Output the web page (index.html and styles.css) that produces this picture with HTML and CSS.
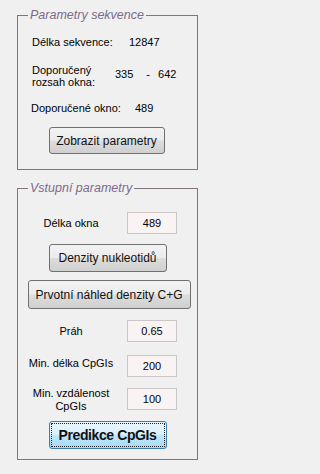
FILE: index.html
```html
<!DOCTYPE html>
<html lang="cs">
<head>
<meta charset="utf-8">
<title>Parametry</title>
<link rel="stylesheet" href="styles.css">
</head>
<body>
<div class="app">
  <fieldset class="panel panel-seq">
    <legend class="panel-title">Parametry sekvence</legend>
    <div class="seq-body">
      <div class="info-row row-len">
        <span class="info-label">Délka sekvence:</span>
        <span class="info-val">12847</span>
      </div>
      <div class="info-row row-range">
        <span class="info-label">Doporučený<br>rozsah okna:</span>
        <span class="range">
          <span class="r-from">335</span><span class="r-dash">-</span><span class="r-to">642</span>
        </span>
      </div>
      <div class="info-row row-win">
        <span class="info-label">Doporučené okno:</span>
        <span class="info-val">489</span>
      </div>
      <button class="btn btn-show" type="button">Zobrazit parametry</button>
    </div>
  </fieldset>

  <fieldset class="panel panel-in">
    <legend class="panel-title">Vstupní parametry</legend>
    <div class="in-body">
      <div class="field-row row-a">
        <label class="field-label">Délka okna</label>
        <div class="field-box">489</div>
      </div>
      <button class="btn btn-dens" type="button">Denzity nukleotidů</button>
      <button class="btn btn-prev" type="button">Prvotní náhled denzity C+G</button>
      <div class="field-row row-b">
        <label class="field-label">Práh</label>
        <div class="field-box">0.65</div>
      </div>
      <div class="field-row row-c">
        <label class="field-label lbl-up">Min. délka CpGIs</label>
        <div class="field-box">200</div>
      </div>
      <div class="field-row row-d">
        <label class="field-label two">Min. vzdálenost<br>CpGIs</label>
        <div class="field-box">100</div>
      </div>
      <button class="btn btn-predict" type="button">Predikce CpGIs</button>
    </div>
  </fieldset>
</div>
</body>
</html>
```

FILE: styles.css
```css
html, body {
  margin: 0;
  padding: 0;
  background: #f0f0f0;
}

body {
  font-family: "Liberation Sans", Arial, sans-serif;
  font-size: 11px;
  color: #000;
  width: 212px;
  height: 474px;
  overflow: hidden;
}

.app {
  display: flex;
  flex-direction: column;
  padding-top: 7px;
}

.panel {
  box-sizing: border-box;
  width: 181px;
  margin: 0 0 0 17px;
  padding: 0;
  border: 1px solid #85727a;
  min-width: 0;
}

.panel-in {
  margin-top: 10px;
}

.panel-title {
  margin-left: 10px;
  padding: 0 2px;
  font-style: italic;
  font-size: 12.5px;
  line-height: 16px;
  color: #7c6a8c;
}

/* ---------- panel 1 ---------- */
.seq-body {
  display: flex;
  flex-direction: column;
  padding: 13px 0 15px 0;
}

.info-row {
  display: flex;
  align-items: center;
  padding-left: 14px;
  line-height: 12px;
}

.info-label {
  flex: none;
}

.row-len .info-label { width: 97px; }
.row-range { margin-top: 16px; }
.row-range .info-label { width: 83px; }
.row-win { margin-top: 14px; }
.row-win .info-label { width: 104px; margin-left: -1px; }

.range {
  display: flex;
  padding-bottom: 4px;
}
.r-dash { margin-left: 13px; }
.r-to { margin-left: 8px; }

/* ---------- buttons ---------- */
.btn {
  box-sizing: border-box;
  display: block;
  align-self: center;
  font-family: "Liberation Sans", Arial, sans-serif;
  font-size: 12px;
  color: #111;
  border: 1px solid #707070;
  border-radius: 3px;
  background: linear-gradient(#f3f3f3 0%, #ebebeb 48%, #dddddd 52%, #cfcfcf 100%);
  padding: 0;
  margin: 0;
}

.btn-show {
  width: 116px;
  height: 27px;
  margin-top: 13px;
  margin-left: 1px;
  margin-right: 3px;
}

/* ---------- panel 2 ---------- */
.in-body {
  display: flex;
  flex-direction: column;
  padding: 16px 0 10px 0;
}

.field-row {
  display: flex;
  align-items: center;
}

.field-label {
  box-sizing: border-box;
  width: 106px;
  text-align: center;
  line-height: 13px;
  flex: none;
}

.lbl-up { padding-bottom: 5px; }

.row-d { align-items: flex-start; }
.two {
  margin-top: -1px;
  margin-bottom: -3px;
}

.field-box {
  box-sizing: border-box;
  width: 50px;
  height: 22px;
  margin-left: 3px;
  border: 1px solid #cdc6c6;
  background: #faf3f3;
  text-align: center;
  line-height: 20px;
  font-size: 11px;
}

.btn-dens {
  width: 118px;
  height: 28px;
  margin-top: 10px;
  margin-left: 0;
}

.btn-prev {
  width: 163px;
  height: 29px;
  margin-top: 8px;
  margin-left: 3px;
}

.row-b { margin-top: 11px; }
.row-c { margin-top: 13px; }
.row-d { margin-top: 11px; }

.btn-predict {
  width: 118px;
  height: 28px;
  margin-top: 11px;
  font-size: 14px;
  font-weight: bold;
  letter-spacing: -0.4px;
  color: #111;
  border-color: #3c7fb1;
  background: linear-gradient(#eaf6fd 0%, #d9f0fc 48%, #bee6fd 52%, #a7d9f5 100%);
  outline: 1px dotted #222;
  outline-offset: -3px;
}
```
